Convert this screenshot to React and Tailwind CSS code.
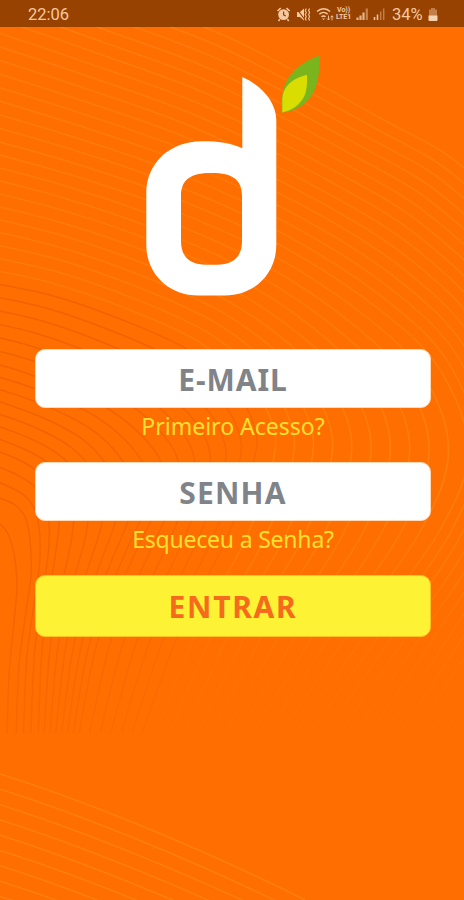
const PRIMARY_FONT = "font-['Noto_Sans','Open_Sans',sans-serif]"

// Guide curves for the background waves, from the outermost to the innermost.
// `steps` is the number of lines drawn between a guide and the next one.
const guides = [
  {
    steps: 14,
    points: [[-30, -60], [110, -8], [232, 39], [380, 118], [464, 168], [560, 270], [600, 400], [600, 540], [560, 640], [500, 740]],
  },
  {
    steps: 11,
    points: [[-30, 134], [70, 162], [170, 196], [280, 245], [380, 310], [440, 370], [468, 450], [440, 530], [365, 635], [290, 740]],
  },
  {
    steps: 6,
    points: [[-30, 279], [50, 295], [125, 321], [190, 351], [234, 390], [254, 425], [254, 460], [226, 540], [180, 630], [140, 740]],
  },
  {
    steps: 7,
    points: [[-30, 357], [20, 371], [70, 390], [110, 410], [142, 436], [162, 465], [160, 500], [132, 560], [98, 640], [78, 740]],
  },
  {
    steps: 3,
    points: [[-30, 442], [0, 452], [25, 463], [44, 477], [55, 497], [59, 522], [56, 550], [50, 590], [42, 650], [38, 740]],
  },
  {
    steps: 1,
    points: [[-30, 490], [-15, 493], [0, 498], [15, 505], [25, 517], [30, 540], [31, 575], [26, 612], [19, 665], [16, 740]],
  },
  {
    steps: 0,
    points: [[-30, 518], [-20, 519], [-10, 521], [0, 524], [8, 534], [14, 554], [17, 585], [14, 622], [9, 675], [7, 740]],
  },
]

function toPath(points) {
  let d = `M${points[0][0]} ${points[0][1]}`
  for (let i = 0; i < points.length - 1; i++) {
    const p0 = points[i - 1] ?? points[i]
    const p1 = points[i]
    const p2 = points[i + 1]
    const p3 = points[i + 2] ?? p2
    d += `C${p1[0] + (p2[0] - p0[0]) / 6} ${p1[1] + (p2[1] - p0[1]) / 6} ${p2[0] - (p3[0] - p1[0]) / 6} ${p2[1] - (p3[1] - p1[1]) / 6} ${p2[0]} ${p2[1]}`
  }
  return d
}

const waves = guides.flatMap((guide, index) => {
  const next = guides[index + 1]
  if (!next) return [{ d: toPath(guide.points), dark: true }]
  return Array.from({ length: guide.steps }, (_, step) => {
    const t = step / guide.steps
    return {
      d: toPath(guide.points.map(([x, y], i) => [x + (next.points[i][0] - x) * t, y + (next.points[i][1] - y) * t])),
      dark: index >= 2,
    }
  })
})

const lowerWaves = Array.from({ length: 9 }, (_, i) => 774 + i * 15.3)

function Background() {
  return (
    <svg className="absolute inset-0 h-full w-full" viewBox="0 0 464 900" fill="none" aria-hidden="true">
      <defs>
        <clipPath id="upper">
          <rect width="464" height="733" />
        </clipPath>
        <linearGradient id="light" gradientUnits="userSpaceOnUse" x1="0" y1="0" x2="0" y2="733">
          <stop offset="0" stopColor="#ff962a" stopOpacity="0.32" />
          <stop offset="0.45" stopColor="#ff9a1a" stopOpacity="0.28" />
          <stop offset="0.65" stopColor="#ff9a1a" stopOpacity="0.4" />
          <stop offset="0.85" stopColor="#ff9a1a" stopOpacity="0.16" />
          <stop offset="1" stopColor="#ff9a1a" stopOpacity="0.04" />
        </linearGradient>
        <linearGradient id="dark" gradientUnits="userSpaceOnUse" x1="0" y1="500" x2="165" y2="660">
          <stop offset="0" stopColor="#d94f00" stopOpacity="0.38" />
          <stop offset="0.5" stopColor="#d94f00" stopOpacity="0.28" />
          <stop offset="1" stopColor="#d94f00" stopOpacity="0.12" />
        </linearGradient>
      </defs>
      <g clipPath="url(#upper)" strokeWidth="1.5">
        {waves.map((wave) => (
          <path key={wave.d} d={wave.d} stroke={wave.dark ? 'url(#dark)' : 'url(#light)'} />
        ))}
      </g>
      <g stroke="#ff9420" strokeOpacity="0.45" strokeWidth="1.5">
        {lowerWaves.map((y) => (
          <path key={y} d={`M0 ${y}C70 ${y + 22} 190 ${y + 68} 305 ${y + 126}`} />
        ))}
      </g>
    </svg>
  )
}

function StatusIcons() {
  return (
    <svg className="h-[27px] w-[110px]" viewBox="276 0 110 27" fill="none" stroke="#f5c8a0" aria-hidden="true">
      {/* alarm */}
      <circle cx="283.6" cy="14.6" r="5.4" fill="#f5c8a0" stroke="none" />
      <path d="M277.5 11l3.2-2.8M289.7 11l-3.2-2.8M279.8 19.3l-1.3 1.6M287.4 19.3l1.3 1.6" strokeWidth="1.6" />
      <path d="M283.6 11.5v3.3l2.2 1.2" stroke="#974200" strokeWidth="1.2" />
      {/* muted, vibrating */}
      <path d="M297 12h3l4-3.5v12L300 17h-3z" fill="#f5c8a0" stroke="none" />
      <path d="M296.5 8.5l9 12" stroke="#974200" strokeWidth="1.2" />
      <path d="M306.3 8.5l-1 2 1 2-1 2 1 2-1 2 1 2M309.6 8.5l-1 2 1 2-1 2 1 2-1 2 1 2" strokeWidth="1.1" />
      {/* wifi */}
      <path d="M317 11.5c4-3.7 9.5-3.7 13 0M319.3 14.2c2.5-2.3 6-2.3 8.4 0M321.5 16.8c1.2-1.2 2.900-1.2 4 0" strokeWidth="1.5" />
      <path d="M322 18.5l1.5 1.5 1.5-1.5z" fill="#f5c8a0" stroke="none" />
      <path d="M328.500 15.5v4.500M327.100 18.5l1.4 1.5 1.4-1.5M332 20.300v-4.500M330.600 17.300l1.4-1.5 1.4 1.5" strokeWidth="0.9" />
      {/* signal strength */}
      <path d="M357.5 17.5v2.5M360.5 15.5v4.5M363.5 12.5v7.5" strokeWidth="2.2" strokeOpacity="0.85" />
      <path d="M366.8 8.5v11.5" strokeWidth="2.2" strokeOpacity="0.5" />
      <path d="M374.5 17v3M377.5 14.5v5.5" strokeWidth="1.5" />
      <path d="M380.7 11.5v8.5M383.7 8.5v11.5" strokeWidth="1.5" strokeOpacity="0.45" />
    </svg>
  )
}

function StatusBar() {
  return (
    <header className="flex h-[27px] items-center bg-[#974200] pl-[28px] pr-[25px] font-['Roboto',sans-serif] text-[16.5px] text-[#f5c8a0]">
      <time className="mt-[3px] leading-none">22:06</time>
      <div className="ml-auto flex items-center">
        <div className="relative">
          <StatusIcons />
          <div className="absolute left-[60px] top-[7px] flex w-[20px] flex-col text-[7px] font-bold leading-[7px]">
            <span className="pl-px">Vo))</span>
            <span className="whitespace-nowrap">LTE1</span>
          </div>
        </div>
        <span className="ml-[6px] mt-[3px] w-[33px] leading-none">34%</span>
        <svg className="ml-[2px] h-[27px] w-[12px]" viewBox="0 0 12 27" aria-hidden="true">
          <path d="M4 8h4v1.5h2V16H2V9.5h2z" fill="#f5c8a0" opacity="0.45" />
          <path d="M1.5 15.5h9V20q0 1-1 1h-7q-1 0-1-1z" fill="#f5d2b2" />
        </svg>
      </div>
    </header>
  )
}

function Logo() {
  return (
    <svg className="mx-auto block h-[242px] w-[176px]" viewBox="145 55 176 242" role="img" aria-label="Logo">
      <path
        fill="#fff"
        fillRule="evenodd"
        d="M242.3 77C261 85 276.300 102 276.300 120V245C276.300 274 254 295.500 225 295.500H198C169 295.500 146.300 274 146.300 245V193C146.300 163 170 141.300 202 141.300C218 141.300 231 143 242.300 148.300ZM211.500 173C190 173 181 180 181 196V241C181 257 190 264.700 206 264.700H217C233 264.700 242 257 242 241V196C242 180 233 173 211.500 173Z"
      />
      <path fill="#7ab51d" d="M319.700 55.300C310 59 303 63 297 68C287 77 282 87 282 101V112.500C291 112 300 108 307 101C317 91 320 76 319.700 55.300Z" />
      <path fill="#d9dd00" d="M307 74.700C300 76.500 294.500 79 290.500 82.500C285 87 282.300 93 282.300 101V112.500C289 111 295 108 300 102.500C306 96 307.500 88 307 74.700Z" />
    </svg>
  )
}

function Field({ type, label, name, className }) {
  return (
    <input
      type={type}
      name={name}
      placeholder={label}
      aria-label={label}
      className={`block h-[59px] w-full rounded-[10px] border border-[#ffd9b5] bg-white pt-[2px] text-center text-[30px] font-bold text-[#808489] outline-none placeholder:text-[#808489] placeholder:opacity-100 ${className}`}
    />
  )
}

function HelpLink({ href, className, children }) {
  return (
    <a href={href} className={`flex h-[54px] justify-center pt-[5px] text-[23px] leading-[26px] text-[#ffe030] ${className}`}>
      {children}
    </a>
  )
}

export default function App() {
  return (
    <div className={`relative isolate h-[900px] w-[464px] overflow-hidden bg-[#ff6e00] ${PRIMARY_FONT}`}>
      <div className="absolute inset-0 -z-10">
        <Background />
      </div>

      <StatusBar />

      <main className="pt-[28px]">
        <div className="pl-[2px]">
          <Logo />
        </div>

        <form className="mt-[52px] flex flex-col pl-[35px] pr-[33px]" onSubmit={(event) => event.preventDefault()}>
          <Field type="email" name="email" label="E-MAIL" className="tracking-[0.9px]" />
          <HelpLink href="#primeiro-acesso" className="tracking-normal">
            Primeiro Acesso?
          </HelpLink>
          <Field type="password" name="senha" label="SENHA" className="tracking-[1.2px]" />
          <HelpLink href="#esqueceu-senha" className="tracking-[-0.2px]">
            Esqueceu a Senha?
          </HelpLink>
          <button
            type="submit"
            className="h-[62px] w-full rounded-[10px] border border-[#ffc21c] bg-[#fdf234] pt-px text-[30px] font-bold tracking-[1.7px] text-[#f56a1c]"
          >
            ENTRAR
          </button>
        </form>
      </main>
    </div>
  )
}
